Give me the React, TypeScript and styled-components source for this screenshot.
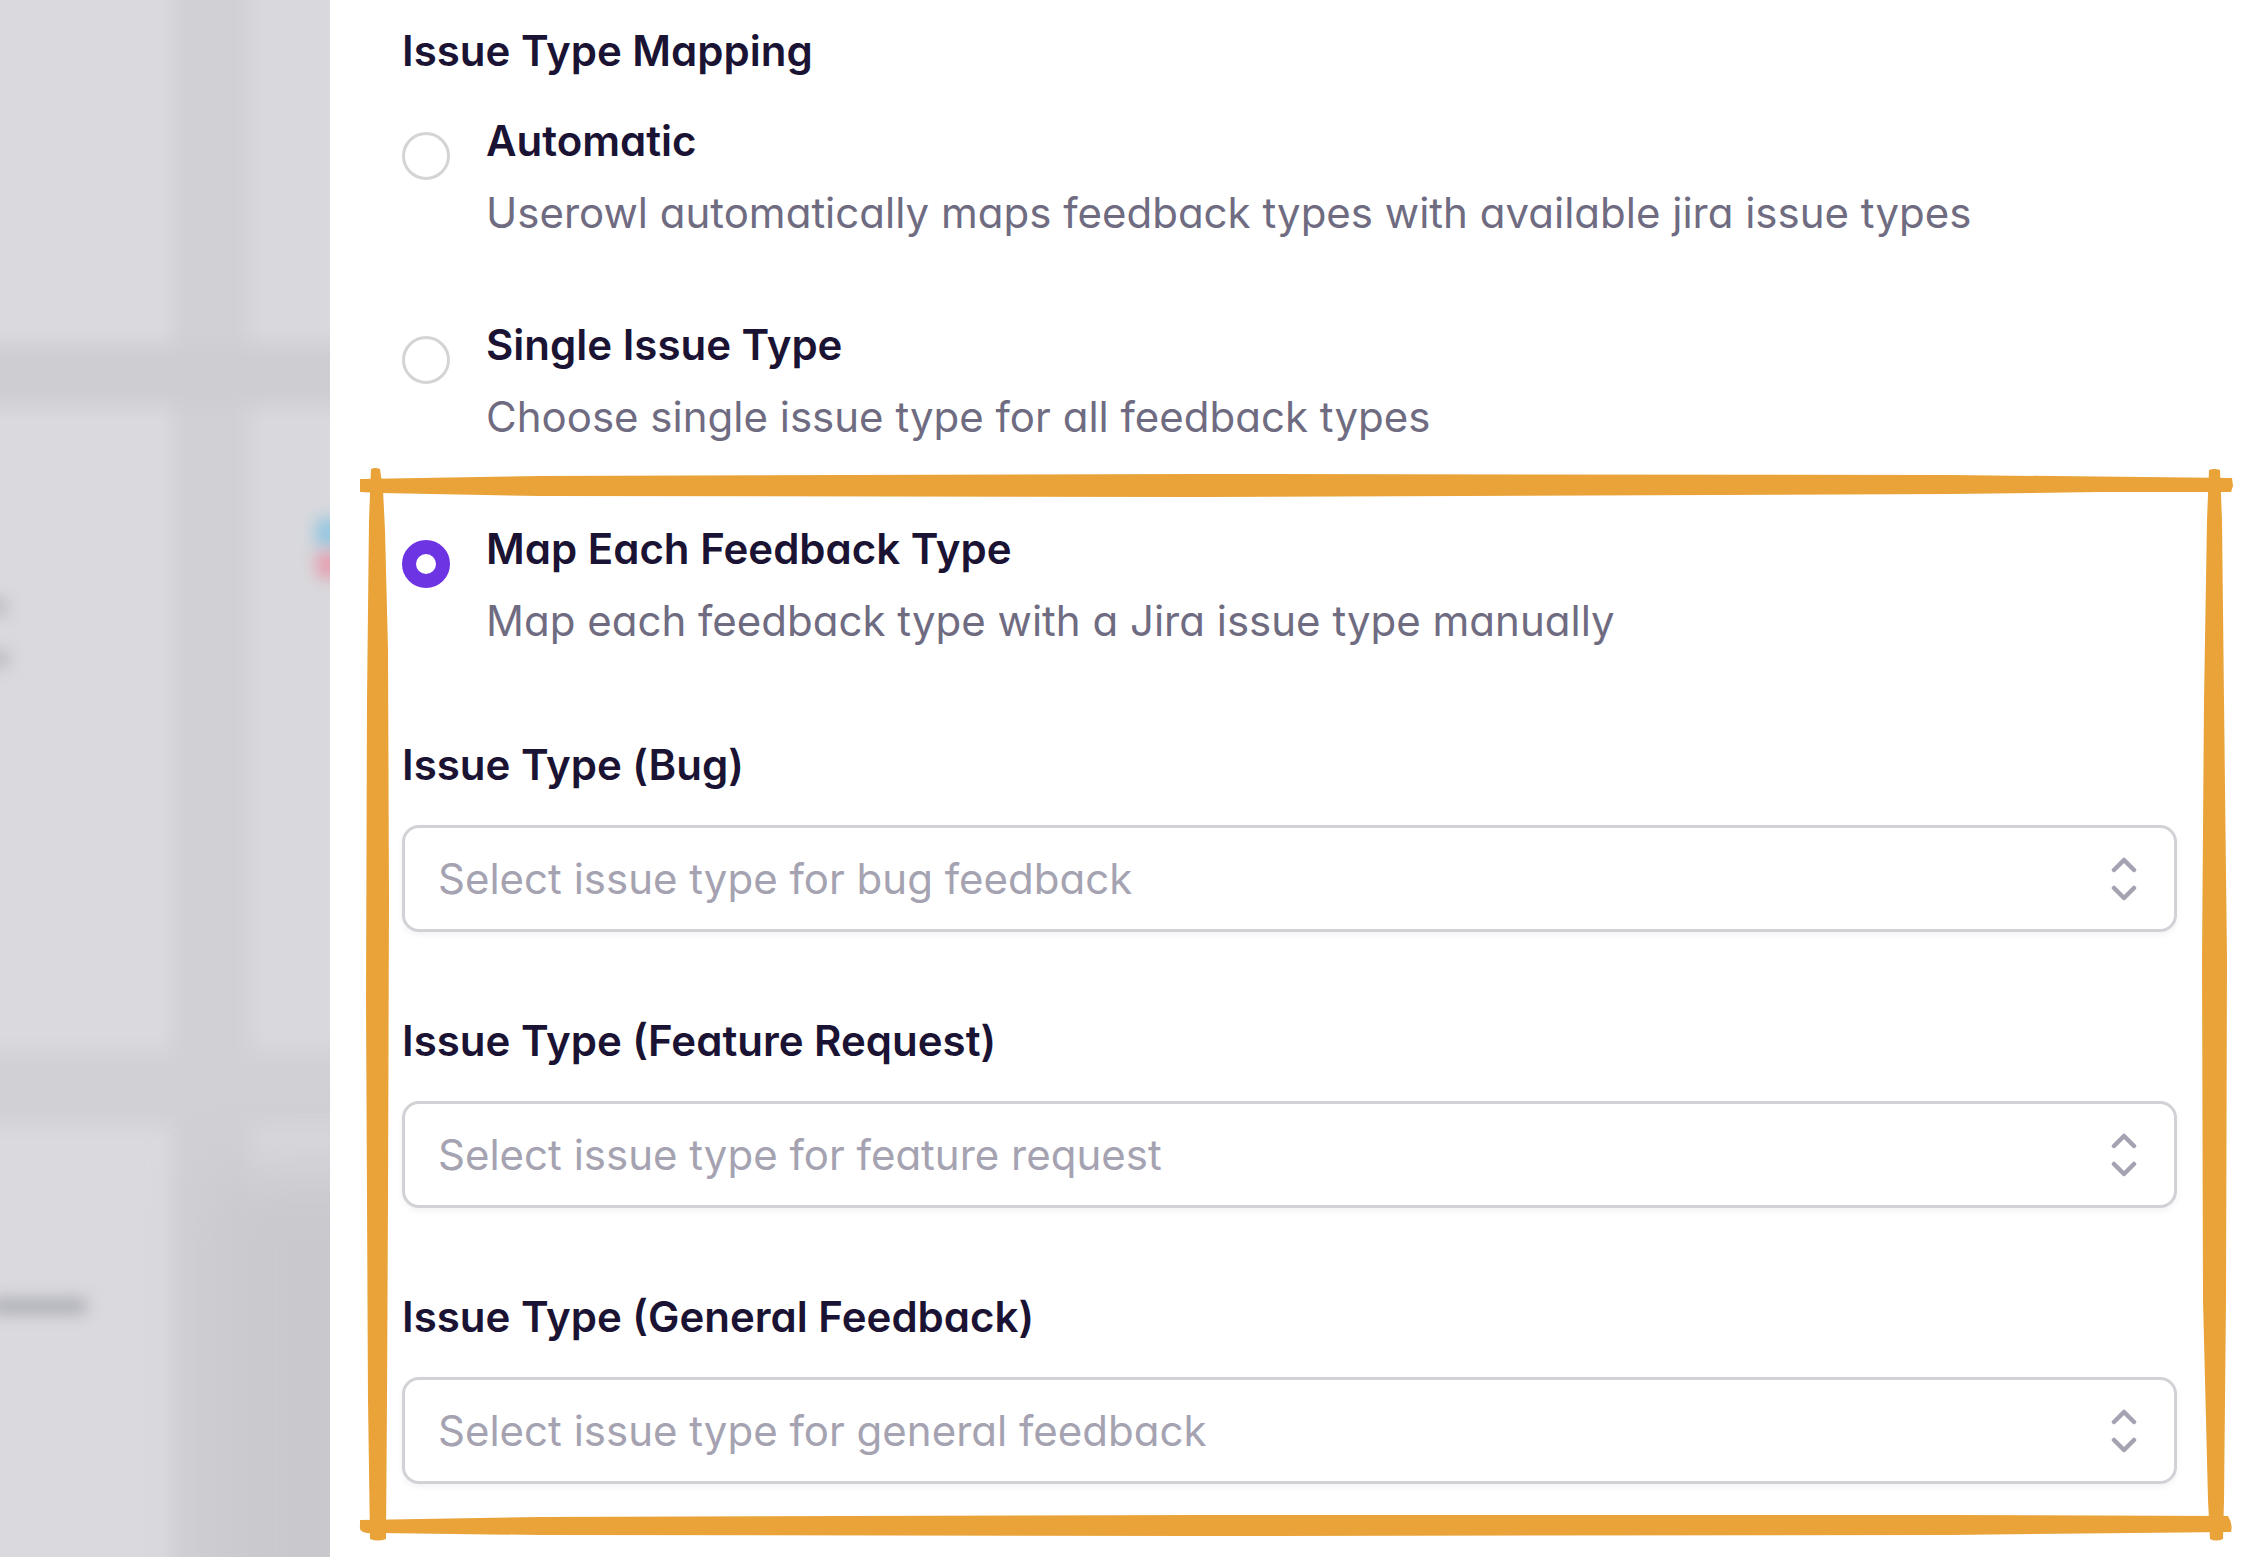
import React from 'react'
import styled, { createGlobalStyle } from 'styled-components'

const GlobalStyle = createGlobalStyle`
  html, body {
    margin: 0;
    padding: 0;
    background: #ffffff;
    overflow: hidden;
  }
`

const Page = styled.div`
  position: relative;
  display: flex;
  width: 2250px;
  height: 1557px;
  overflow: hidden;
  font-family: 'Inter', 'Liberation Sans', sans-serif;
  font-feature-settings: 'cv11';
`

const Backdrop = styled.div`
  position: relative;
  flex: 0 0 330px;
  overflow: hidden;
  background:
    linear-gradient(180deg, transparent 330px, #cdcdd2 358px, #cdcdd2 392px, transparent 420px),
    linear-gradient(180deg, transparent 1035px, #d0d0d5 1068px, #d0d0d5 1110px, transparent 1140px),
    linear-gradient(90deg, #dadade 0, #dadade 160px, #d0d0d5 185px, #d0d0d5 235px, #d9d9dd 265px, #d9d9dd 100%);
`

const BlurBit = styled.div<{ $top: number; $left: number; $width: number; $height: number; $color: string; $blur?: number }>`
  position: absolute;
  top: ${p => p.$top}px;
  left: ${p => p.$left}px;
  width: ${p => p.$width}px;
  height: ${p => p.$height}px;
  background: ${p => p.$color};
  border-radius: 8px;
  filter: blur(${p => p.$blur ?? 8}px);
`

const Panel = styled.main`
  flex: 1;
  box-sizing: border-box;
  padding: 23px 73px 0 72px;
  background: #ffffff;
`

const Heading = styled.div`
  font-size: 42px;
  line-height: 56px;
  font-weight: 600;
  color: #1a1333;
`

const RadioList = styled.div`
  display: flex;
  flex-direction: column;
  gap: 76px;
  margin-top: 34px;
`

const RadioRow = styled.label`
  display: flex;
  gap: 36px;
`

const RadioDot = styled.span<{ $checked: boolean }>`
  flex: 0 0 48px;
  box-sizing: border-box;
  width: 48px;
  height: 48px;
  margin-top: 19px;
  border-radius: 50%;
  border: ${p => (p.$checked ? '14px solid #6d34e4' : '3px solid #d4d4d7')};
  background: #ffffff;
`

const RadioText = styled.div`
  display: flex;
  flex-direction: column;
  gap: 16px;
`

const RadioTitle = styled.div`
  font-size: 42px;
  line-height: 56px;
  font-weight: 600;
  color: #1a1333;
`

const RadioHint = styled.div`
  font-size: 42px;
  line-height: 56px;
  font-weight: 400;
  color: #6f6c82;
`

const FieldList = styled.div`
  display: flex;
  flex-direction: column;
  gap: 82px;
  margin-top: 88px;
`

const Field = styled.div`
  display: flex;
  flex-direction: column;
  gap: 32px;
`

const FieldLabel = styled.div`
  font-size: 42px;
  line-height: 56px;
  font-weight: 600;
  color: #1a1333;
`

const SelectBox = styled.div`
  display: flex;
  align-items: center;
  justify-content: space-between;
  box-sizing: border-box;
  height: 107px;
  margin-bottom: -1px;
  padding: 0 37px 0 33px;
  border: 3px solid #d1d1d6;
  border-radius: 17px;
  background: #ffffff;
  box-shadow: 0 3px 6px rgba(26, 19, 51, 0.05);
`

const Placeholder = styled.span`
  font-size: 42px;
  line-height: 56px;
  color: #a5a3b1;
`

const Markup = styled.svg`
  position: absolute;
  top: 0;
  left: 0;
  pointer-events: none;
`

const UpDown = () => (
  <svg width="26" height="44" viewBox="0 0 26 44" fill="none" stroke="#a5a3b1" strokeWidth="4.5" strokeLinecap="round" strokeLinejoin="round">
    <polyline points="3,13 13,3 23,13" />
    <polyline points="3,31 13,41 23,31" />
  </svg>
)

const options = [
  {
    title: 'Automatic',
    hint: 'Userowl automatically maps feedback types with available jira issue types',
    checked: false,
  },
  {
    title: 'Single Issue Type',
    hint: 'Choose single issue type for all feedback types',
    checked: false,
  },
  {
    title: 'Map Each Feedback Type',
    hint: 'Map each feedback type with a Jira issue type manually',
    checked: true,
  },
]

const fields = [
  { label: 'Issue Type (Bug)', placeholder: 'Select issue type for bug feedback' },
  { label: 'Issue Type (Feature Request)', placeholder: 'Select issue type for feature request' },
  { label: 'Issue Type (General Feedback)', placeholder: 'Select issue type for general feedback' },
]

export default function App() {
  return (
    <Page>
      <GlobalStyle />
      <Backdrop>
        <BlurBit $top={1170} $left={215} $width={200} $height={460} $color="#c8c8cd" $blur={32} />
        <BlurBit $top={598} $left={-14} $width={22} $height={18} $color="#b9b9c0" />
        <BlurBit $top={650} $left={-14} $width={24} $height={18} $color="#b9b9c0" />
        <BlurBit $top={1298} $left={-10} $width={98} $height={16} $color="#adadb6" />
        <BlurBit $top={518} $left={316} $width={24} $height={30} $color="#8fc4df" />
        <BlurBit $top={552} $left={316} $width={24} $height={26} $color="#e59aab" />
      </Backdrop>
      <Panel>
        <Heading>Issue Type Mapping</Heading>
        <RadioList>
          {options.map(option => (
            <RadioRow key={option.title}>
              <RadioDot $checked={option.checked} />
              <RadioText>
                <RadioTitle>{option.title}</RadioTitle>
                <RadioHint>{option.hint}</RadioHint>
              </RadioText>
            </RadioRow>
          ))}
        </RadioList>
        <FieldList>
          {fields.map(field => (
            <Field key={field.label}>
              <FieldLabel>{field.label}</FieldLabel>
              <SelectBox>
                <Placeholder>{field.placeholder}</Placeholder>
                <UpDown />
              </SelectBox>
            </Field>
          ))}
        </FieldList>
      </Panel>
      <Markup width="2250" height="1557" viewBox="0 0 2250 1557" fill="#e9a339">
        <path d="M360 479 L540 476 L1200 474 L1950 475 L2232 478 L2233 486 L2231 492 L2100 492 L1950 494 L1200 497 L540 496 L380 493 L360 492 Z" />
        <path d="M360 1520 L540 1517 L1200 1515 L1950 1515 L2228 1516 Q2233 1524 2231 1532 L1950 1535 L1200 1536 L540 1535 L380 1533 Q358 1535 360 1526 Z" />
        <path d="M371 469 Q375 467 380 469 L383 490 L385 530 L388 650 L389 900 L388 1200 L387 1400 L386 1539 Q378 1542 370 1539 L368 1400 L366 1000 L367 700 L369 520 Z" />
        <path d="M2209 470 Q2214 468 2220 470 L2222 520 L2224 700 L2227 960 L2226 1300 L2224 1500 L2223 1539 Q2216 1542 2210 1539 L2208 1500 L2203 1300 L2202 960 L2204 700 L2207 520 Z" />
      </Markup>
    </Page>
  )
}
